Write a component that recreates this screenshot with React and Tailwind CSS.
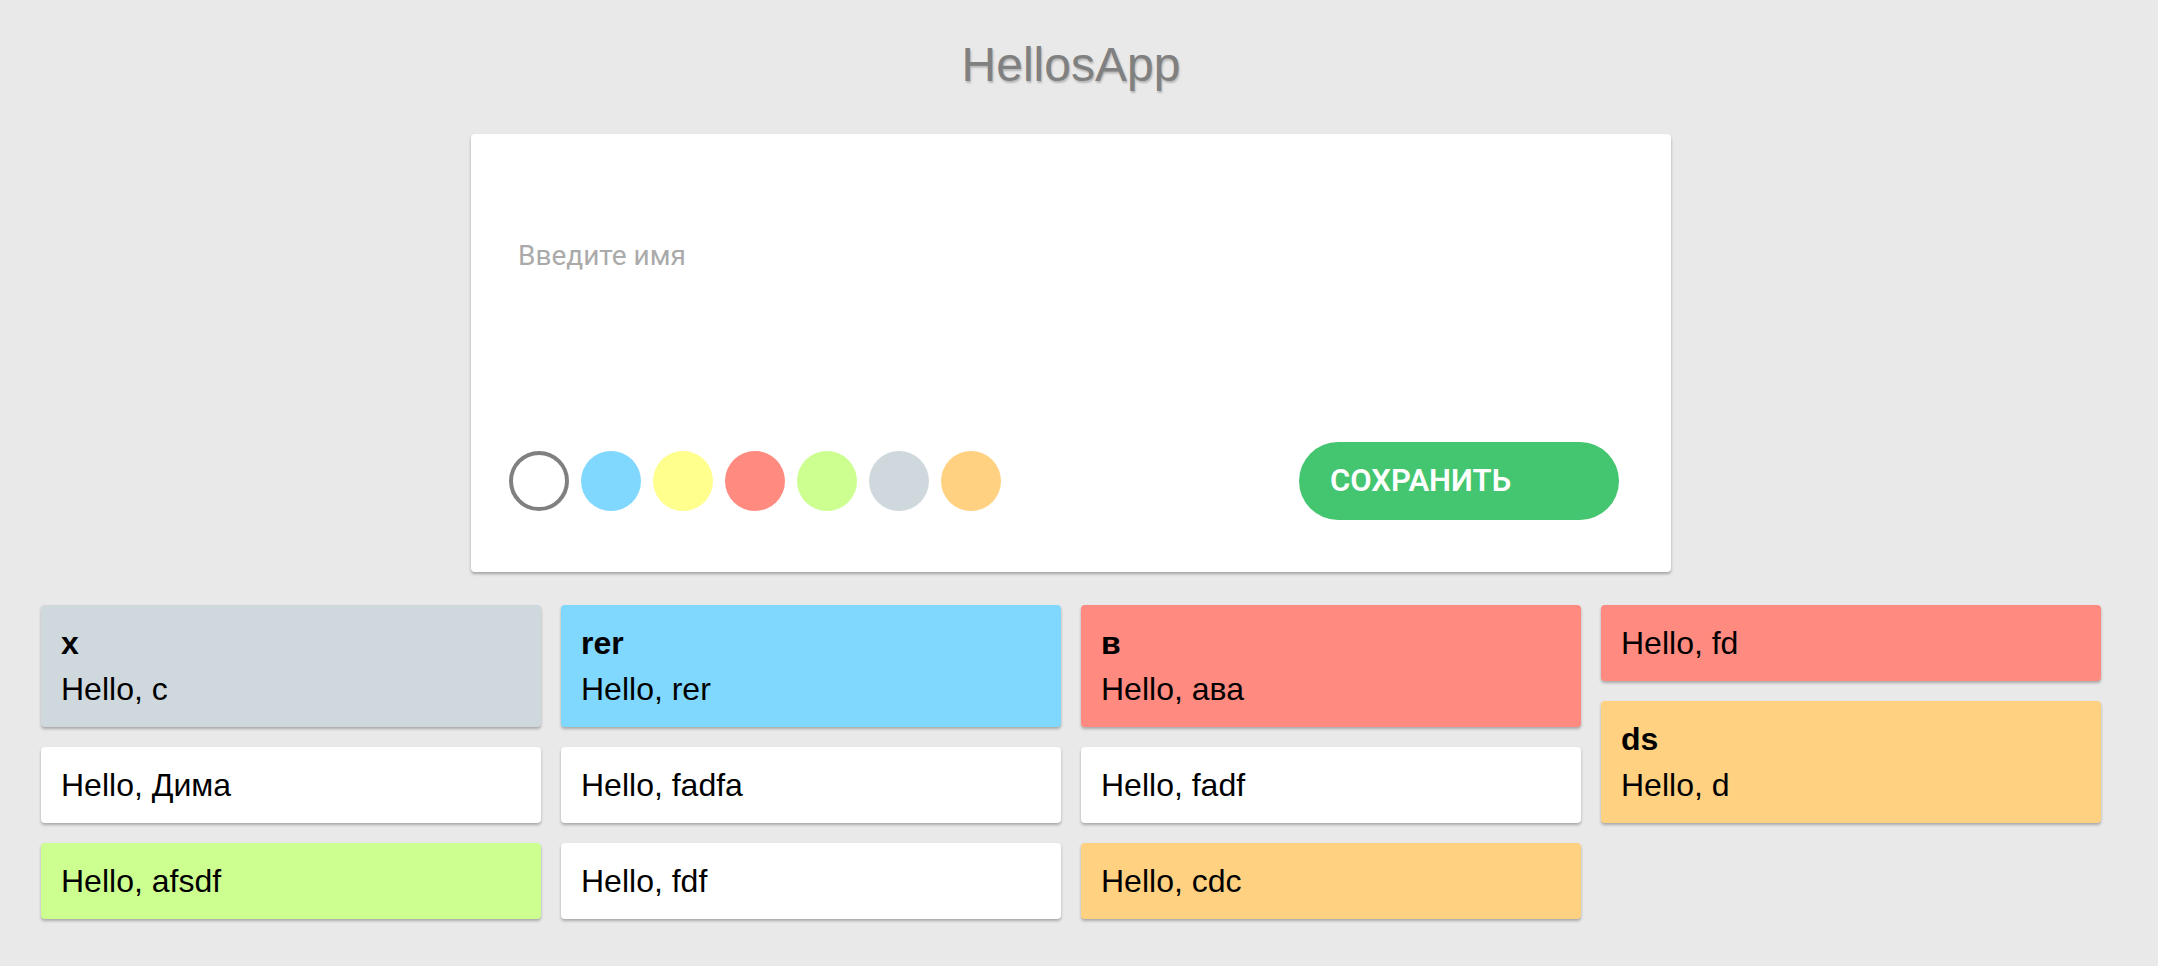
import React from "react";

const swatches = [
  { id: "none", bg: "bg-white", ring: "border-4 border-[#808080]" },
  { id: "blue", bg: "bg-[#80d8ff]" },
  { id: "yellow", bg: "bg-[#ffff8d]" },
  { id: "red", bg: "bg-[#ff8a80]" },
  { id: "green", bg: "bg-[#ccff90]" },
  { id: "grey", bg: "bg-[#cfd8dc]" },
  { id: "orange", bg: "bg-[#ffd180]" },
];

const columns = [
  [
    { title: "x", text: "Hello, c", bg: "bg-[#cfd8dc]" },
    { text: "Hello, Дима", bg: "bg-white" },
    { text: "Hello, afsdf", bg: "bg-[#ccff90]" },
  ],
  [
    { title: "rer", text: "Hello, rer", bg: "bg-[#80d8ff]" },
    { text: "Hello, fadfa", bg: "bg-white" },
    { text: "Hello, fdf", bg: "bg-white" },
  ],
  [
    { title: "в", text: "Hello, ава", bg: "bg-[#ff8a80]" },
    { text: "Hello, fadf", bg: "bg-white" },
    { text: "Hello, cdc", bg: "bg-[#ffd180]" },
  ],
  [
    { text: "Hello, fd", bg: "bg-[#ff8a80]" },
    { title: "ds", text: "Hello, d", bg: "bg-[#ffd180]" },
  ],
];

function Note({ note }) {
  return (
    <div
      className={`${note.bg} rounded-[4px] px-5 py-5 text-black text-[32px] leading-[36px] shadow-[0_2px_3px_rgba(0,0,0,0.28)]`}
    >
      {note.title && <div className="font-bold mb-[10px]">{note.title}</div>}
      <div>{note.text}</div>
    </div>
  );
}

export default function App() {
  return (
    <div className="min-h-[966px] w-full bg-[#e9e9e9] font-['Liberation_Sans',Arial,sans-serif]">
      <div className="w-[2142px] flex flex-col items-center pt-[37px] pb-10">
        {/* Header */}
        <h1 className="text-[48px] leading-[56px] text-[#808080] [text-shadow:1px_2px_2px_rgba(0,0,0,0.22)]">
          HellosApp
        </h1>

        {/* Form */}
        <div className="mt-[41px] w-[1200px] h-[438px] bg-white rounded-[4px] shadow-[0_2px_3px_rgba(0,0,0,0.3)] flex flex-col justify-between font-['Roboto',sans-serif]">
          <div className="pt-[102px] pl-[47px] text-[28px] leading-[40px] text-[#aaaaaa]">
            Введите имя
          </div>
          <div className="flex items-center justify-between pl-[38px] pr-[52px] pb-[52px]">
            <div className="flex items-center gap-3">
              {swatches.map((s) => (
                <div
                  key={s.id}
                  className={`w-[60px] h-[60px] rounded-full ${s.bg} ${s.ring || ""}`}
                />
              ))}
            </div>
            <button className="w-[320px] h-[78px] rounded-full bg-[#44c56f] text-white text-[31px] font-semibold text-left pl-[31px]">
              СОХРАНИТЬ
            </button>
          </div>
        </div>

        {/* Notes */}
        <div className="mt-[33px] w-full px-[41px] grid grid-cols-4 gap-5 items-start">
          {columns.map((col, i) => (
            <div key={i} className="flex flex-col gap-5">
              {col.map((note, j) => (
                <Note key={j} note={note} />
              ))}
            </div>
          ))}
        </div>
      </div>
    </div>
  );
}
